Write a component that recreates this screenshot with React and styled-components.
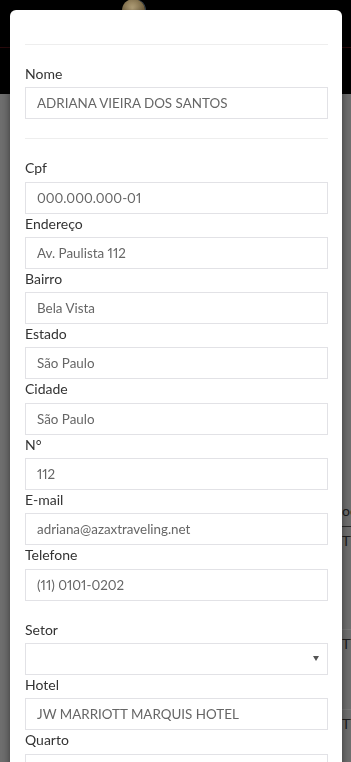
import React from "react";
import styled, { createGlobalStyle } from "styled-components";

const GlobalStyle = createGlobalStyle`
  html, body {
    margin: 0;
    padding: 0;
    height: 100%;
    overflow: hidden;
  }
  body {
    font-family: Lato, "Open Sans", sans-serif;
    background: #6f6f6f;
  }
`;

/* page behind the overlay */
const Page = styled.div`
  min-height: 762px;
  background: #6f6f6f;
`;

const TopBar = styled.div`
  height: 94px;
  background: #000;
`;

const TopBarInner = styled.div`
  height: 47px;
  border-bottom: 1px solid #2a0a0c;
  display: flex;
  padding-left: 122px;
`;

const Avatar = styled.div`
  width: 23px;
  height: 23px;
  margin-top: -1px;
  border-radius: 50%;
  background: radial-gradient(circle at 45% 40%, #b9a67e, #6d5c3b 70%);
  box-shadow: 1px 0 0 #3a4a5a;
`;

const Backdrop = styled.div`
  padding: 406px 0 0 342px;
  color: #1c1c1c;
  font-size: 14px;
  white-space: nowrap;
  overflow: hidden;
`;

const BackRow = styled.div`
  height: ${(p) => p.h}px;
  border-bottom: 1px solid ${(p) => p.line};
  line-height: 18px;
  padding-top: ${(p) => p.pt}px;
  box-sizing: border-box;
`;

/* modal */
const Modal = styled.div`
  position: fixed;
  top: 10px;
  left: 10px;
  width: 332px;
  box-sizing: border-box;
  padding: 34px 14px 40px 15px;
  background: #fff;
  border-radius: 6px;
  box-shadow: 0 3px 9px rgba(0, 0, 0, 0.5);
`;

const Divider = styled.hr`
  border: 0;
  border-top: 1px solid #eeeeee;
  margin: 0 0 19px;
`;

const Spacer = styled.div`
  height: ${(p) => p.h}px;
`;

const Field = styled.div`
  display: flex;
  flex-direction: column;
`;

const Label = styled.label`
  font-size: 14px;
  line-height: 20px;
  color: #333;
  margin-bottom: 3.3px;
`;

const Input = styled.div`
  height: 32px;
  box-sizing: border-box;
  border: 1px solid #e2e2e6;
  padding: 0 11px;
  display: flex;
  align-items: center;
  justify-content: space-between;
  font-size: 13.4px;
  font-variant-numeric: proportional-nums;
  color: #666;
  background: #fff;
`;

const Caret = styled.span`
  width: 0;
  height: 0;
  margin-right: -3px;
  border-left: 3px solid transparent;
  border-right: 3px solid transparent;
  border-top: 5px solid #555;
`;

const fields = [
  ["Cpf", "000.000.000-01"],
  ["Endereço", "Av. Paulista 112"],
  ["Bairro", "Bela Vista"],
  ["Estado", "São Paulo"],
  ["Cidade", "São Paulo"],
  ["N°", "112"],
  ["E-mail", "adriana@azaxtraveling.net"],
  ["Telefone", "(11) 0101-0202"],
];

const FormField = ({ label, value, select }) => (
  <Field>
    <Label>{label}</Label>
    <Input>
      <span>{value}</span>
      {select && <Caret />}
    </Input>
  </Field>
);

const App = () => (
  <>
    <GlobalStyle />
    <Page>
      <TopBar>
        <TopBarInner>
          <Avatar />
        </TopBarInner>
      </TopBar>
      <Backdrop>
        <BackRow h={27} pt={2} line="#2a2a2a">oo</BackRow>
        <BackRow h={103} pt={5} line="#7a7a7a">TT</BackRow>
        <BackRow h={80} pt={5} line="#7a7a7a">TT</BackRow>
        <BackRow h={40} pt={5} line="transparent">TT</BackRow>
      </Backdrop>
    </Page>

    <Modal>
      <Divider />
      <FormField label="Nome" value="ADRIANA VIEIRA DOS SANTOS" />
      <Spacer h={19} />
      <Divider />
      {fields.map(([l, v]) => (
        <FormField key={l} label={l} value={v} />
      ))}
      <Spacer h={19} />
      <FormField label="Setor" value="" select />
      <FormField label="Hotel" value="JW MARRIOTT MARQUIS HOTEL" />
      <FormField label="Quarto" value="" />
    </Modal>
  </>
);

export default App;
